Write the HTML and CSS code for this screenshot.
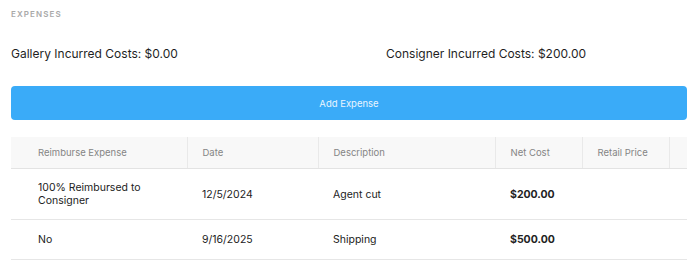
FILE: index.html
```html
<!DOCTYPE html>
<html>
<head>
  <meta charset="utf-8">
  <title>Expenses</title>
  <link rel="stylesheet" href="styles.css">
</head>
<body>
  <div class="section">
    <h2 class="section-title">Expenses</h2>

    <div class="totals">
      <div class="total">Gallery Incurred Costs: $0.00</div>
      <div class="total">Consigner Incurred Costs: $200.00</div>
    </div>

    <button class="btn btn-primary">Add Expense</button>

    <table class="expenses">
      <colgroup>
        <col class="col-reimburse">
        <col class="col-date">
        <col class="col-desc">
        <col class="col-cost">
        <col class="col-retail">
        <col class="col-extra">
      </colgroup>
      <thead>
        <tr>
          <th>Reimburse Expense</th>
          <th>Date</th>
          <th>Description</th>
          <th>Net Cost</th>
          <th>Retail Price</th>
          <th></th>
        </tr>
      </thead>
      <tbody>
        <tr>
          <td>100% Reimbursed to<br>Consigner</td>
          <td>12/5/2024</td>
          <td>Agent cut</td>
          <td class="amount">$200.00</td>
          <td></td>
          <td></td>
        </tr>
        <tr>
          <td>No</td>
          <td>9/16/2025</td>
          <td>Shipping</td>
          <td class="amount">$500.00</td>
          <td></td>
          <td></td>
        </tr>
      </tbody>
    </table>
  </div>
</body>
</html>
```

FILE: styles.css
```css
body {
  margin: 0;
  font-family: Inter, 'Noto Sans', sans-serif;
  color: #1f1f1f;
  background: #fff;
}

.section {
  padding: 9px 13px 0 11px;
}

.section-title {
  margin: 0;
  font-size: 8px;
  font-weight: 600;
  letter-spacing: 1.1px;
  text-transform: uppercase;
  color: #a9a9a9;
  line-height: 10px;
}

.totals {
  display: grid;
  grid-template-columns: 375px 1fr;
  margin-top: 27px;
  font-size: 12px;
  line-height: 16px;
}

.btn {
  display: block;
  width: 100%;
  border: none;
  border-radius: 4px;
  font-family: inherit;
  cursor: pointer;
}

.btn-primary {
  margin-top: 24px;
  height: 34px;
  background: #3aabf8;
  color: #e9f5ff;
  font-size: 9.5px;
}

.expenses {
  width: 676px;
  margin-top: 17px;
  border-collapse: collapse;
  table-layout: fixed;
}

.col-reimburse { width: 176px; }
.col-date { width: 131px; }
.col-desc { width: 177px; }
.col-cost { width: 87px; }
.col-retail { width: 87px; }
.col-extra { width: 18px; }

.expenses th {
  height: 31px;
  padding: 0 14px 0 15px;
  background: #f8f8f8;
  border-right: 1px solid #e9e9e9;
  border-bottom: 1px solid #e3e3e3;
  text-align: left;
  font-size: 9.5px;
  font-weight: 400;
  color: #858585;
}

.expenses th:last-child {
  border-right: none;
}

.expenses td {
  padding: 0 14px 0 15px;
  border-bottom: 1px solid #e6e6e6;
  font-size: 10.5px;
  line-height: 13px;
  color: #222;
}

.expenses tbody tr:first-child td {
  height: 50px;
}

.expenses tbody tr:last-child td {
  height: 39px;
}

.expenses th:first-child,
.expenses td:first-child {
  padding-left: 27px;
}

.expenses td.amount {
  font-weight: 700;
}
```
